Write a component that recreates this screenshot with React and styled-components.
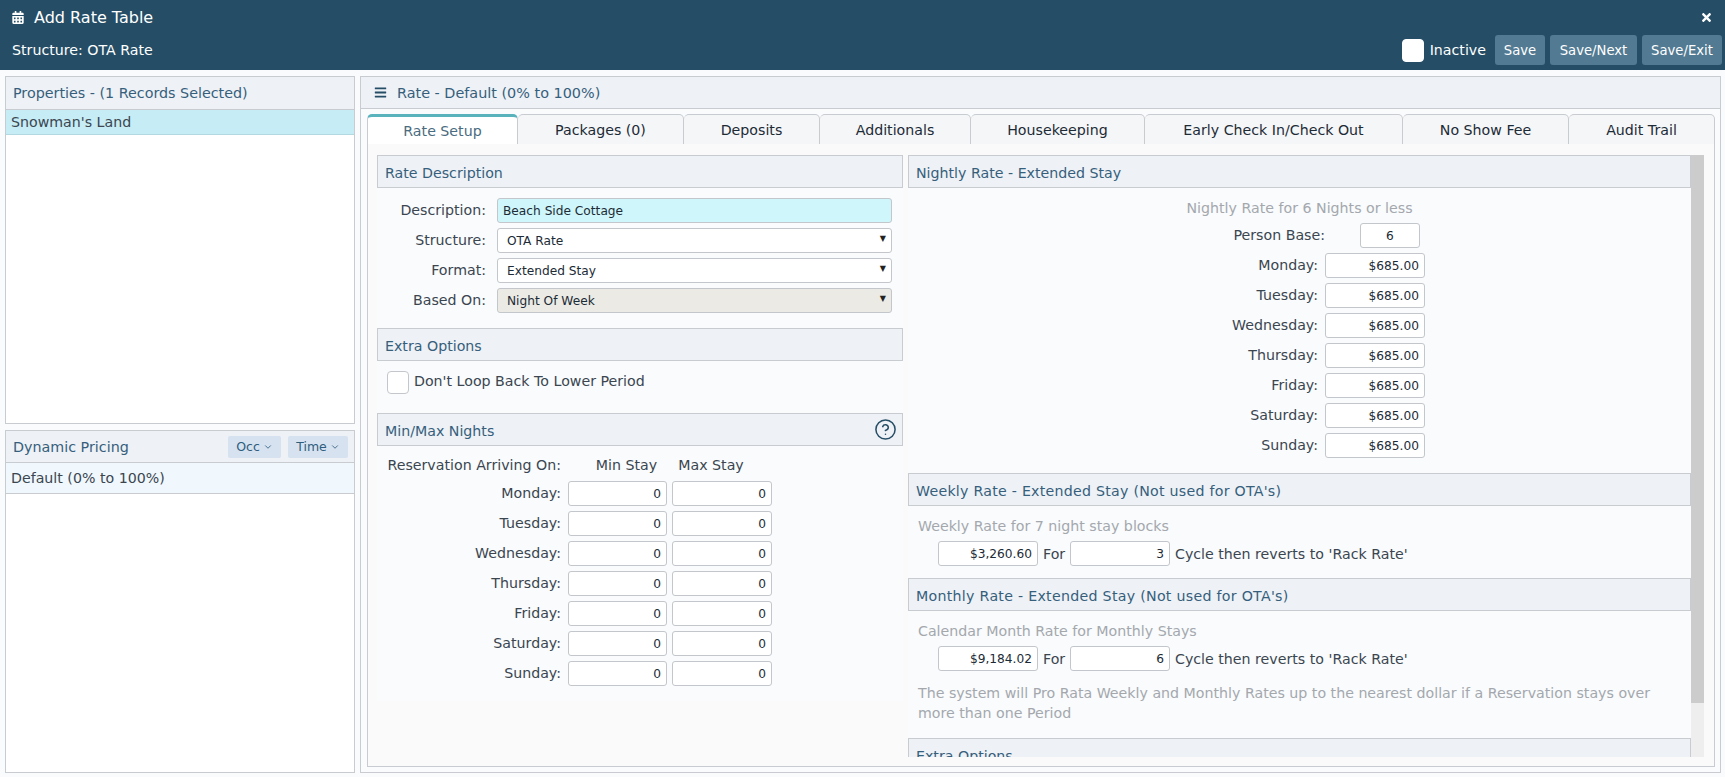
import React from "react";
import styled, { createGlobalStyle } from "styled-components";
import { FaCalendarAlt, FaTimes, FaBars } from "react-icons/fa";
import { FiChevronDown } from "react-icons/fi";
import { CircleHelp } from "lucide-react";

const Global = createGlobalStyle`
  html, body { margin: 0; padding: 0; background: #fafbfc; }
  body { font-family: "DejaVu Sans", Verdana, sans-serif; font-size: 14.2px; color: #3b4650; }
  * { box-sizing: border-box; }
`;

const Page = styled.div`
  width: 1725px; height: 777px; display: flex; flex-direction: column; overflow: hidden;
`;
const TopBar = styled.header`
  height: 70px; background: #254e66; color: #fff; display: flex; flex-direction: column; padding: 0 3px 0 12px; flex: none;
`;
const TitleRow = styled.div`
  height: 34px; display: flex; align-items: center; justify-content: space-between; padding-right: 9px;
`;
const Title = styled.h1`
  margin: 0; font-size: 16px; font-weight: 400; display: flex; align-items: center; gap: 10px;
  svg { width: 12px; height: 13px; }
`;
const Close = styled.span`
  display: flex; svg { width: 13px; height: 13px; }
`;
const SubRow = styled.div`
  height: 32px; display: flex; align-items: center; justify-content: space-between;
`;
const Actions = styled.div`
  display: flex; align-items: center; gap: 5px;
`;
const Check = styled.span`
  width: 22px; height: 23px; display: block; flex: none; background: #fff; border-radius: 4px;
  border: 1px solid ${p => p.$border || "#c3c7cc"};
`;
const InactiveLabel = styled.span`
  margin: 0 4px 0 1px; white-space: nowrap;
`;
const ActionBtn = styled.button`
  height: 30px; width: ${p => p.$w}px; padding: 0; border: none; border-radius: 3px; background: #527a92; color: #fff;
  font: inherit; font-size: 13.2px; white-space: nowrap;
`;
const Body = styled.main`
  flex: 1; display: flex; gap: 5px; padding: 6px 4px 4px 5px; min-height: 0;
`;
const LeftCol = styled.div`
  width: 350px; flex: none; display: flex; flex-direction: column; gap: 6px;
`;
const Panel = styled.section`
  background: #fff; border: 1px solid #c8cbd0; display: flex; flex-direction: column;
  ${p => p.$h ? `height: ${p.$h}px; flex: none;` : "flex: 1; min-height: 0;"}
`;
const PanelHead = styled.div`
  height: ${p => p.$h}px; flex: none; background: #eef1f6; border-bottom: 1px solid #c8cbd0; display: flex; align-items: center;
  justify-content: space-between; padding: 0 6px 0 7px; color: #365f7c; font-size: 14.3px;
`;
const ListItem = styled.div`
  height: ${p => p.$h}px; padding: 0 5px; display: flex; align-items: center; background: ${p => p.$bg};
  border-bottom: 1px solid ${p => p.$line}; color: #3b4650;
`;
const HeadBtns = styled.div`
  display: flex; gap: 7px;
`;
const HeadBtn = styled.span`
  height: 22px; width: ${p => p.$w}px; background: #d6e2f0; border-radius: 2px; display: flex; align-items: center; justify-content: center;
  gap: 3px; font-size: 12.5px; color: #2f5d7e; svg { width: 10px; height: 10px; }
`;
const MainPanel = styled.section`
  flex: 1; min-width: 0; background: #fafbfc; border: 1px solid #c8cbd0; display: flex; flex-direction: column;
`;
const MainHead = styled.div`
  height: 32px; flex: none; background: #eef1f6; border-bottom: 1px solid #c8cbd0; display: flex; align-items: center; gap: 10px;
  padding: 0 13px; color: #365f7c; font-size: 14.4px; svg { width: 13px; height: 13px; color: #254e66; }
`;
const TabsArea = styled.div`
  flex: 1; min-height: 0; padding: 5px 5px 5px 6px; display: flex; flex-direction: column;
`;
const TabRow = styled.div`
  display: flex; height: 31px; flex: none;
`;
const Tab = styled.div`
  width: ${p => p.$w}px; flex: none; display: flex; align-items: center; justify-content: center; white-space: nowrap;
  border: 1px solid #c8cbd0; border-left-width: ${p => p.$first ? 1 : 0}px; border-radius: 5px 5px 0 0;
  background: ${p => p.$active ? "#fff" : "#f5f6f8"}; color: ${p => p.$active ? "#4a6c80" : "#1c2b36"};
  ${p => p.$active ? "border-top: 3px solid #58b3bd; border-bottom-color: #fff;" : ""}
`;
const TabBody = styled.div`
  flex: 1; min-height: 0; border: 1px solid #c8cbd0; border-top: none; background: #fafafa; padding: 11px 10px 9px 9px;
  display: grid; grid-template-columns: 526px 788px 13px; overflow: hidden; margin-top: -1px;
`;
const Col = styled.div`
  height: 602px; overflow: hidden; background: #f9fbfd;
  ${p => p.$right ? "margin-left: 5px;" : ""}
`;
const LeftForm = styled(Col)`
  height: 546px;
`;
const SecHead = styled.div`
  height: 33px; background: #eef1f6; border: 1px solid #c8cbd0; display: flex; align-items: center; justify-content: space-between;
  padding: 2px 5px 0 7px; color: #365f7c; white-space: nowrap; letter-spacing: ${p => p.$ls || 0}px;
  svg { width: 23px; height: 23px; color: #254e66; margin-top: -2px; }
`;
const FormGrid = styled.div`
  display: grid; grid-template-columns: 109px 395px; column-gap: 11px; row-gap: 5px; align-items: center;
  padding: 10px 0 15px 0;
`;
const Label = styled.label`
  text-align: right; color: #3b4650; white-space: nowrap; position: relative; top: -1px;
  ${p => p.$out ? `margin-right: -${p.$out}px;` : ""}
`;
const TextIn = styled.input`
  height: 25px; width: 100%; border: 1px solid #c3c7cc; border-radius: 3px; padding: 0 5px; font: inherit; font-size: 12.2px;
  color: #1c2b36; background: #fff; text-align: ${p => p.$align || "left"}; outline: none; min-width: 0;
`;
const DescIn = styled(TextIn)`
  background: #cff6fa;
`;
const SelectWrap = styled.div`
  position: relative;
  &::after { content: "▼"; position: absolute; right: 6px; top: 6px; font-size: 8px; color: #222; pointer-events: none; }
`;
const Sel = styled.select`
  width: 100%; height: 25px; appearance: none; border: 1px solid #c3c7cc; border-radius: 3px; padding: 0 9px; font: inherit; font-size: 12.2px;
  color: #1c2b36; background: ${p => p.$bg || "#fff"}; outline: none;
`;
const CheckRow = styled.div`
  display: flex; align-items: flex-start; gap: 5px; padding: 10px 10px 19px; height: 52px; line-height: 20px;
`;
const StayGrid = styled.div`
  display: grid; grid-template-columns: 186px 99px 100px; column-gap: 5px; row-gap: 5px; align-items: center; padding: 10px 0 0 0;
  ${Label} { padding-right: 2px; }
`;
const StayHead = styled.div`
  text-align: center; height: 20px; line-height: 18px; white-space: nowrap;
  padding: ${p => p.$pad};
`;
const Note = styled.div`
  color: #a4a8ad; line-height: 20px;
  padding: ${p => p.$pad || "10px 0 5px 10px"};
  text-align: ${p => p.$center ? "center" : "left"};
`;
const NightGrid = styled.div`
  display: grid; grid-template-columns: 410px 100px; column-gap: 7px; row-gap: 5px; align-items: center; padding-bottom: 15px;
`;
const BaseIn = styled(TextIn)`
  width: 60px; margin-left: 35px; text-align: center;
`;
const CycleRow = styled.div`
  display: flex; align-items: center; gap: 5px; padding-left: 30px; color: #3b4650; height: 25px; margin-bottom: 12px; white-space: nowrap;
`;
const CycleIn = styled(TextIn)`
  width: 100px; text-align: right; flex: none;
`;
const ForText = styled.span`
  width: 22px; flex: none;
`;
const Track = styled.div`
  width: 13px; height: 602px; background: #eeeeee;
`;
const Thumb = styled.div`
  width: 13px; height: 548px; background: #cccccc;
`;

const days = ["Monday","Tuesday","Wednesday","Thursday","Friday","Saturday","Sunday"];
const tabs = [["Rate Setup",151],["Packages (0)",166],["Deposits",136],["Additionals",151],["Housekeeping",174],["Early Check In/Check Out",258],["No Show Fee",166],["Audit Trail",146]];

function Cycle({ value, count }) {
  return (
    <CycleRow>
      <CycleIn readOnly value={value} />
      <ForText>For</ForText>
      <CycleIn readOnly value={count} />
      <span>Cycle then reverts to 'Rack Rate'</span>
    </CycleRow>
  );
}

export default function App() {
  return (
    <Page>
      <Global />
      <TopBar>
        <TitleRow>
          <Title><FaCalendarAlt />Add Rate Table</Title>
          <Close><FaTimes /></Close>
        </TitleRow>
        <SubRow>
          <span>Structure: OTA Rate</span>
          <Actions>
            <Check $border="#fff" />
            <InactiveLabel>Inactive</InactiveLabel>
            <ActionBtn $w={50}>Save</ActionBtn>
            <ActionBtn $w={87}>Save/Next</ActionBtn>
            <ActionBtn $w={80}>Save/Exit</ActionBtn>
          </Actions>
        </SubRow>
      </TopBar>
      <Body>
        <LeftCol>
          <Panel $h={348}>
            <PanelHead $h={33}>Properties - (1 Records Selected)</PanelHead>
            <ListItem $h={25} $bg="#c6ecf5" $line="#b4d8e2">Snowman's Land</ListItem>
          </Panel>
          <Panel>
            <PanelHead $h={32}>
              Dynamic Pricing
              <HeadBtns>
                <HeadBtn $w={53}>Occ <FiChevronDown /></HeadBtn>
                <HeadBtn $w={60}>Time <FiChevronDown /></HeadBtn>
              </HeadBtns>
            </PanelHead>
            <ListItem $h={31} $bg="#f0f7fd" $line="#c8cbd0">Default (0% to 100%)</ListItem>
          </Panel>
        </LeftCol>
        <MainPanel>
          <MainHead><FaBars />Rate - Default (0% to 100%)</MainHead>
          <TabsArea>
            <TabRow>
              {tabs.map(([t, w], i) => <Tab key={t} $w={w} $first={i === 0} $active={i === 0}>{t}</Tab>)}
            </TabRow>
            <TabBody>
              <LeftForm>
                <SecHead>Rate Description</SecHead>
                <FormGrid>
                  <Label>Description:</Label>
                  <DescIn readOnly value="Beach Side Cottage" />
                  <Label>Structure:</Label>
                  <SelectWrap><Sel defaultValue="OTA Rate"><option>OTA Rate</option></Sel></SelectWrap>
                  <Label>Format:</Label>
                  <SelectWrap><Sel defaultValue="Extended Stay"><option>Extended Stay</option></Sel></SelectWrap>
                  <Label>Based On:</Label>
                  <SelectWrap><Sel $bg="#ebeae4" defaultValue="Night Of Week"><option>Night Of Week</option></Sel></SelectWrap>
                </FormGrid>
                <SecHead>Extra Options</SecHead>
                <CheckRow><Check />Don't Loop Back To Lower Period</CheckRow>
                <SecHead>Min/Max Nights<CircleHelp strokeWidth={1.6} /></SecHead>
                <StayGrid>
                  <Label>Reservation Arriving On:</Label>
                  <StayHead $pad="0 0 0 18px">Min Stay</StayHead>
                  <StayHead $pad="0 22px 0 0">Max Stay</StayHead>
                  {days.map(d => (
                    <React.Fragment key={d}>
                      <Label>{d}:</Label>
                      <TextIn $align="right" readOnly value="0" />
                      <TextIn $align="right" readOnly value="0" />
                    </React.Fragment>
                  ))}
                </StayGrid>
              </LeftForm>
              <Col $right>
                <SecHead>Nightly Rate - Extended Stay</SecHead>
                <Note $center $pad="10px 0 5px 0">Nightly Rate for 6 Nights or less</Note>
                <NightGrid>
                  <Label $out={7}>Person Base:</Label>
                  <BaseIn readOnly value="6" />
                  {days.map(d => (
                    <React.Fragment key={d}>
                      <Label>{d}:</Label>
                      <TextIn $align="right" readOnly value="$685.00" />
                    </React.Fragment>
                  ))}
                </NightGrid>
                <SecHead $ls={0.25}>Weekly Rate - Extended Stay (Not used for OTA's)</SecHead>
                <Note>Weekly Rate for 7 night stay blocks</Note>
                <Cycle value="$3,260.60" count="3" />
                <SecHead $ls={0.28}>Monthly Rate - Extended Stay (Not used for OTA's)</SecHead>
                <Note>Calendar Month Rate for Monthly Stays</Note>
                <Cycle value="$9,184.02" count="6" />
                <Note $pad="0 30px 15px 10px">The system will Pro Rata Weekly and Monthly Rates up to the nearest dollar if a Reservation stays over more than one Period</Note>
                <SecHead>Extra Options</SecHead>
              </Col>
              <Track><Thumb /></Track>
            </TabBody>
          </TabsArea>
        </MainPanel>
      </Body>
    </Page>
  );
}
